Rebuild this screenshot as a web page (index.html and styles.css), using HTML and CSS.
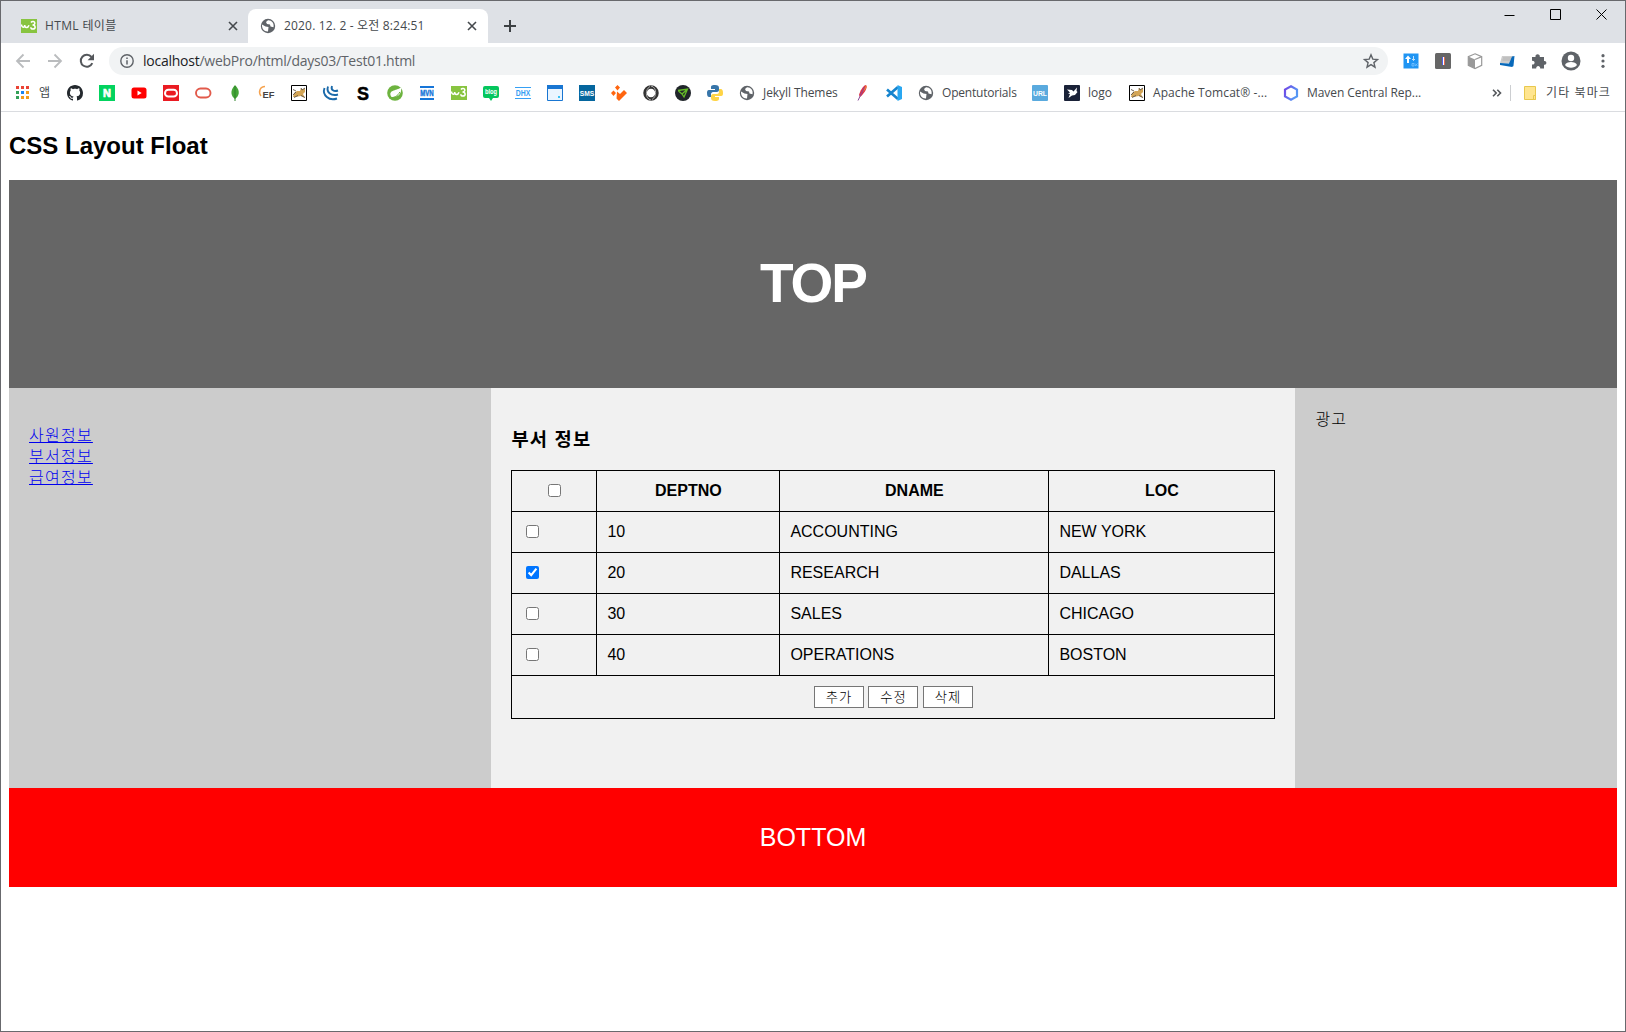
FILE: index.html
```html
<!DOCTYPE html>
<html lang="ko">
<head>
<meta charset="utf-8">
<title>2020. 12. 2 - 오전 8:24:51</title>
<link rel="stylesheet" href="styles.css">
</head>
<body>
<svg class="defs" width="0" height="0" aria-hidden="true">
  <symbol id="globe" viewBox="0 0 16 16"><circle cx="8" cy="8" r="7.2" fill="#5f6368"/><path d="M2 6.500 5.500 8.500l3 .5-.5 4.500C4 13.800 1.800 10.500 2 6.500zM8 2.200 6 4l1 2 3 .5.5 2 3 .8C14.500 5 11.500 2 8 2.200z" fill="#fff"/></symbol>
  <symbol id="w3" viewBox="0 0 16 16"><path d="M0 1h16v14H0z" fill="#88c440"/><path d="M.5 6.500c.2 3.500 3.200 3.500 3.200.5 0 3.300 3.300 3.300 4.300.300M10 4.500c1-1.500 4-1.300 3.800.8-.1 1-1 1.700-2.300 1.700 3.300 0 3.500 4 .5 4-1.500 0-2.200-.8-2.200-1.800" fill="none" stroke="#fff" stroke-width="1.500"/></symbol>
  <symbol id="tomcat" viewBox="0 0 16 16"><path d="M.5.500h15v15H.5z" fill="#fff" stroke="#000"/><path d="m2 12 1-4 3-2 3 0 1-3 1.500 1.500L14 3v4l-2 2 2 4-4-2-3 .5L4 12z" fill="#d3a557"/><path d="m2 4.500 3 1.500M3 12.500l4-2m3 0 4 2M10 3l1 2 3-2M2 10l3-3" fill="none" stroke="#5d5348" stroke-width=".9"/></symbol>
</svg>
<div class="window">
  <div class="tabstrip">
    <div class="tab">
      <svg class="ic" viewBox="0 0 16 16"><use href="#w3"/></svg>
      <span class="tab-title t1">HTML 테이블</span>
      <svg class="close" viewBox="0 0 10 10"><path d="m1 1 8 8m0-8-8 8"/></svg>
    </div>
    <div class="tab active">
      <svg class="ic" viewBox="0 0 16 16"><use href="#globe"/></svg>
      <span class="tab-title t2">2020. 12. 2 - 오전 8:24:51</span>
      <svg class="close" viewBox="0 0 10 10"><path d="m1 1 8 8m0-8-8 8"/></svg>
    </div>
    <svg class="plus" viewBox="0 0 12 12"><path d="M6 0v12M0 6h12"/></svg>
    <div class="controls">
      <svg viewBox="0 0 11 11"><path d="M.5 6.500h10"/></svg>
      <svg viewBox="0 0 11 11"><path d="M.5.500h10v10H.5z"/></svg>
      <svg viewBox="0 0 11 11"><path d="m.5.500 10 10m0-10-10 10"/></svg>
    </div>
  </div>
  <div class="toolbar">
    <svg class="nav" viewBox="0 0 16 16"><path d="M15 8H2m6.500-6.500L2 8l6.500 6.500" fill="none" stroke="#babcbe" stroke-width="1.800"/></svg>
    <svg class="nav" viewBox="0 0 16 16"><path d="M1 8h13M7.500 1.500 14 8l-6.500 6.500" fill="none" stroke="#babcbe" stroke-width="1.800"/></svg>
    <svg class="nav" viewBox="0 0 16 16"><path d="M13.300 10.200A6 6 0 1 1 12.500 4" fill="none" stroke="#54575b" stroke-width="2"/><path d="M15 .8v6.400H8.600z" fill="#54575b"/></svg>
    <div class="omnibox">
      <svg class="info" viewBox="0 0 14 14"><circle cx="7" cy="7" r="6.200" fill="none" stroke="#5f6368" stroke-width="1.400"/><path d="M7 6.200v4.200M7 3.500V5" stroke="#5f6368" stroke-width="1.500"/></svg>
      <span class="url"><b>localhost</b>/webPro/html/days03/Test01.html</span>
      <svg class="star" viewBox="0 0 16 16"><path d="m8 1.800 1.800 4.300 4.700.4-3.600 3.100 1.100 4.600L8 11.700l-4 2.500 1.100-4.600L1.500 6.500l4.700-.4z" fill="none" stroke="#5f6368" stroke-width="1.400"/></svg>
    </div>
    <div class="exts">
      <svg viewBox="0 0 16 16"><path d="M.5.500h15v15H.5z" fill="#2095f3"/><path d="M5 10V4.500" stroke="#fff" stroke-width="2"/><path d="m2 6 3-3.500L8 6z" fill="#fff"/><path d="M10.500 3v4.500M9 6l1.500 1.500L12 6" fill="none" stroke="#bfe1fb"/><path d="M9 10.500h2v2.500H9zm3 0 2.500 2.500m0-2.500L12 13" fill="none" stroke="#7dc5ff" stroke-width=".8"/></svg>
      <svg viewBox="0 0 16 16"><rect width="16" height="16" rx="1.500" fill="#666"/><path d="M7.500 4v8" stroke="#5360e8"/><path d="M8.500 4v8" stroke="#fff"/><path d="M9.500 4v8" stroke="#e26a50"/></svg>
      <svg viewBox="0 0 16 16"><path d="m8 .8 6.700 2.800v8.800L8 15.500l-6.700-3.100V3.600z" fill="#fff" stroke="#999" stroke-width="1.200"/><path d="M1.300 3.600 8 6.500v9l-6.700-3.100z" fill="#999"/><path d="m8 6.500 6.700-2.900" stroke="#999" stroke-width="1.200"/></svg>
      <svg viewBox="0 0 16 16"><path d="M3 3h11l-2 7H1z" fill="#ccc"/><path d="m15.500 3-1 9.500c-.2 1.500-1.500 1.500-3 1.300L1 12v-2l9 .5 3-7z" fill="#0869ba"/><path d="M4 5h8M3.500 7h8" stroke="#aaa" stroke-width=".7"/></svg>
      <svg viewBox="0 0 16 16"><path d="M1 4h3.500c-.8-3.800 5-3.800 4.300 0H13v4c3.200-.5 3.200 4 0 3.800V15.500H9.200c.3-3.500-4.300-3.500-4 0H1v-4c3.500.4 3.500-4 0-3.800z" fill="#5f6368"/></svg>
      <svg class="avatar" viewBox="0 0 20 20"><circle cx="10" cy="10" r="9.500" fill="#5f6368"/><circle cx="10" cy="7" r="3.200" fill="#fff"/><path d="M4 14c1-4 11-4 12 0-2.500 3.700-9.500 3.700-12 0z" fill="#fff"/></svg>
      <svg viewBox="0 0 16 16"><g fill="#5f6368"><circle cx="8" cy="2.700" r="1.600"/><circle cx="8" cy="8" r="1.600"/><circle cx="8" cy="13.300" r="1.600"/></g></svg>
    </div>
  </div>
  <div class="bookmarks">
    <svg viewBox="0 0 16 16"><path d="M1 1h3v3H1zm5 0h3v3H6zm5 0h3v3h-3z" fill="#ea4335"/><path d="M1 6h3v3H1zM1 11h3v3H1z" fill="#34a058"/><path d="M6 6h3v3H6z" fill="#1a85f0"/><path d="M11 6h3v3h-3zM6 11h3v3H6zm5 0h3v3h-3z" fill="#f29b1d"/></svg>
    <span class="label app">앱</span>
    <svg viewBox="0 0 16 16"><path fill="#24292e" d="M8 0C3.580 0 0 3.580 0 8c0 3.540 2.290 6.530 5.470 7.590.4.070.55-.17.55-.38 0-.19-.01-.82-.01-1.490-2.010.37-2.530-.49-2.690-.94-.09-.23-.48-.94-.82-1.130-.28-.15-.68-.52-.01-.53.63-.01 1.080.58 1.230.82.72 1.210 1.870.87 2.330.66.070-.52.280-.87.510-1.070-1.780-.2-3.640-.89-3.640-3.950 0-.87.310-1.590.820-2.150-.08-.2-.36-1.020.08-2.120 0 0 .67-.21 2.200.82.640-.18 1.320-.27 2-.27s1.360.09 2 .27c1.530-1.040 2.200-.82 2.200-.82.440 1.100.160 1.920.080 2.120.510.560.820 1.270.820 2.150 0 3.070-1.870 3.750-3.650 3.950.290.250.540.730.540 1.480 0 1.070-.01 1.930-.01 2.200 0 .21.150.46.550.38A8.010 8.010 0 0 0 16 8c0-4.420-3.580-8-8-8z"/></svg>
    <svg viewBox="0 0 16 16"><path d="M0 0h16v16H0z" fill="#03d35f"/><text x="8" y="12" text-anchor="middle" class="g" font-size="11" fill="#fff" stroke="#fff" stroke-width=".7">N</text></svg>
    <svg viewBox="0 0 16 16"><rect x=".5" y="2.500" width="15" height="11" rx="2.500" fill="#f00"/><path d="m6.500 5.500 4.200 2.500-4.200 2.500z" fill="#fff"/></svg>
    <svg viewBox="0 0 16 16"><path d="M0 0h16v16H0z" fill="#ea1b22"/><rect x="2" y="4.800" width="12" height="6.800" rx="3.400" fill="none" stroke="#fff" stroke-width="2"/></svg>
    <svg viewBox="0 0 16 16"><rect x="1" y="3.500" width="14.500" height="9" rx="4.500" fill="none" stroke="#e25a4b" stroke-width="1.900"/></svg>
    <svg viewBox="0 0 16 16"><path d="M8 0c6 6 4 11 0 14C4 11 2.500 6 8 0z" fill="#45a538"/><path d="M8 1v15" stroke="#2f832b"/></svg>
    <svg viewBox="0 0 16 16"><path d="M6 1.500C1 1.500-1 7 2 11" fill="none" stroke="#f6a34f" stroke-width="1.500"/><text x="3.500" y="12.500" class="g" font-size="9.500" textLength="12" lengthAdjust="spacingAndGlyphs" fill="#444">EF</text></svg>
    <svg viewBox="0 0 16 16"><use href="#tomcat"/></svg>
    <svg viewBox="0 0 16 16"><path d="M1.500 3c-2.500 7 4.500 13.500 12.500 10.500M5 1.500C3 7.500 8.500 11.500 15 9.500M9 1c-1.500 4 2 6 6 4.500" fill="none" stroke="#1b6aaa" stroke-width="1.900"/></svg>
    <svg viewBox="0 0 16 16"><text x="2" y="15" class="g" font-size="19" textLength="12" lengthAdjust="spacingAndGlyphs" fill="#000" stroke="#000" stroke-width=".5">S</text></svg>
    <svg viewBox="0 0 16 16"><circle cx="8" cy="8" r="7.800" fill="#6db33f"/><path d="M14 2.500C15 8 12 12.500 4.500 12 .5 5 9 6 14 2.500z" fill="#fff"/><path d="M2.500 13C7 13 11 11 12.800 7" fill="none" stroke="#6db33f"/></svg>
    <svg viewBox="0 0 16 16"><path d="M1 1h14v2H1zm0 12h14v2H1z" fill="#1675d8"/><text x="1.200" y="11.300" class="g" font-size="8.500" textLength="13.500" lengthAdjust="spacingAndGlyphs" fill="#1675d8" stroke="#1675d8" stroke-width=".4">MVN</text></svg>
    <svg viewBox="0 0 16 16"><use href="#w3"/></svg>
    <svg viewBox="0 0 16 16"><path d="M2 1h12q2 0 2 2v8q0 2-2 2h-4l-2 3-2-3H2q-2 0-2-2V3q0-2 2-2z" fill="#05c65d"/><text x="2" y="9" class="g" font-size="6.500" textLength="12" lengthAdjust="spacingAndGlyphs" fill="#fff">blog</text></svg>
    <svg viewBox="0 0 16 16"><path d="M0 2h16v1H0zm0 11h16v1H0z" fill="#36a0f4"/><text x=".8" y="11.200" class="g" font-size="9" textLength="14.500" lengthAdjust="spacingAndGlyphs" fill="#36a0f4">DHX</text></svg>
    <svg viewBox="0 0 16 16"><path d="M.5.500h15v15H.5z" fill="#eaf5ff" stroke="#1976d2"/><path d="M0 0h16v4H0z" fill="#1976d2"/><path d="M11 11h2v2h-2z" fill="#3ac1f4"/></svg>
    <svg viewBox="0 0 16 16"><path d="M0 0h16v16H0z" fill="#05669e"/><text x=".8" y="11" class="g" font-size="8" textLength="14.500" lengthAdjust="spacingAndGlyphs" fill="#fff">SMS</text></svg>
    <svg viewBox="0 0 16 16"><path d="m6.500 0 2.500 2.500-2.500 3L4 2.500zM2.500 5.500 5 8l-2.500 3L0 8zM6 6.500l3 2.500 4-4 3 3-8 8-2.500-2.500z" fill="#ff650f"/></svg>
    <svg viewBox="0 0 16 16"><circle cx="8" cy="8" r="6" fill="none" stroke="#333" stroke-width="3.500"/><path d="M8 1c6 1 6 11 1 13.500M8 15C2 14 2 4 7 1.500" fill="none" stroke="#aaa"/></svg>
    <svg viewBox="0 0 16 16"><circle cx="8" cy="8" r="8" fill="#20252a"/><path d="m3 5.500 9.500-1.500L9 12l-2-3-3.500-3M7 9l5-4.500" fill="none" stroke="#65bd28" stroke-width="1.300"/></svg>
    <svg viewBox="0 0 16 16"><path d="M8 0c-4 0-4 1-4 3v1h4v1H2C0 5 0 7 0 8c0 3 1 4 2 4h2V9c0-1 1-2 2-2h4c1 0 2-1 2-2V3c0-2-1-3-4-3z" fill="#3775a9"/><path d="M8 16c4 0 4-1 4-3v-1H8v-1h6c2 0 2-2 2-3 0-3-1-4-2-4h-2v3c0 1-1 2-2 2H6c-1 0-2 1-2 2v2c0 2 1 3 4 3z" fill="#ffd445"/></svg>
    <svg viewBox="0 0 16 16"><use href="#globe"/></svg>
    <span class="label l-jekyll">Jekyll Themes</span>
    <svg viewBox="0 0 16 16"><path d="M11.500 0c3 1-.5 8-5.500 12L5 10C6 6 9 1 11.500 0z" fill="#dc3349"/><path d="M10.500 2 4 15.500" stroke="#8b4a99"/><path d="M12 0c2 2-1 5-3 7z" fill="#f47a36"/></svg>
    <svg viewBox="0 0 16 16"><path d="m1 4.500 11 9.500M1 11.500 12 2" stroke="#1684ce" stroke-width="2.700"/><path d="m11.500 0 4.500 2v12l-4.500 2z" fill="#29a7f1"/></svg>
    <svg viewBox="0 0 16 16"><use href="#globe"/></svg>
    <span class="label l-open">Opentutorials</span>
    <svg viewBox="0 0 16 16"><rect width="16" height="16" rx="1" fill="#5aaade"/><text x="1" y="10.800" class="g" font-size="7.500" textLength="14" lengthAdjust="spacingAndGlyphs" fill="#fff">URL</text></svg>
    <svg viewBox="0 0 16 16"><rect width="16" height="16" rx="1" fill="#1a2238"/><path d="m3 4.500 5 .5 1.500 1.500L13 2.500l-.5 3.500 1 1-2.500 3-3 .5L4.500 13l1.500-4-2-.5 2-1z" fill="#fff"/></svg>
    <span class="label l-logo">logo</span>
    <svg viewBox="0 0 16 16"><use href="#tomcat"/></svg>
    <span class="label l-tomcat">Apache Tomcat® -...</span>
    <svg viewBox="0 0 16 16"><defs><linearGradient id="hex" x2="1" y2=".5"><stop stop-color="#7044e5"/><stop offset="1" stop-color="#5597f4"/></linearGradient></defs><path d="m8 1.300 6 3.300v6.800l-6 3.300-6-3.300V4.600z" fill="none" stroke="url(#hex)" stroke-width="2.200"/></svg>
    <span class="label l-maven">Maven Central Rep...</span>
    <div class="others">
      <svg class="more" viewBox="0 0 10 8"><path d="m1 .8 3.200 3.200L1 7.200m4.300-6.400L8.500 4 5.300 7.200" fill="none" stroke="#54575b" stroke-width="1.600"/></svg>
      <i class="sep"></i>
      <svg viewBox="0 0 16 16"><path d="M2.500 1.500h11v13h-11z" fill="#ffe58f" stroke="#e8c84e"/><path d="M11.500 10.500h2v4h-2z" fill="#ffe58f" stroke="#e8c84e"/></svg>
      <span class="label l-etc">기타 북마크</span>
    </div>
  </div>
  <main class="page">
    <h2>CSS Layout Float</h2>
    <header class="top"><h1>TOP</h1></header>
    <div class="row">
      <nav class="side">
        <a href="#">사원정보</a>
        <a href="#">부서정보</a>
        <a href="#">급여정보</a>
      </nav>
      <section class="content">
        <h3>부서 정보</h3>
        <table>
          <colgroup><col class="c1"><col class="c2"><col class="c3"><col class="c4"></colgroup>
          <thead><tr><th><input type="checkbox"></th><th>DEPTNO</th><th>DNAME</th><th>LOC</th></tr></thead>
          <tbody>
            <tr><td><input type="checkbox"></td><td>10</td><td>ACCOUNTING</td><td>NEW YORK</td></tr>
            <tr><td><input type="checkbox" checked></td><td>20</td><td>RESEARCH</td><td>DALLAS</td></tr>
            <tr><td><input type="checkbox"></td><td>30</td><td>SALES</td><td>CHICAGO</td></tr>
            <tr><td><input type="checkbox"></td><td>40</td><td>OPERATIONS</td><td>BOSTON</td></tr>
          </tbody>
          <tfoot><tr><td colspan="4"><div class="actions"><button>추가</button><button>수정</button><button>삭제</button></div></td></tr></tfoot>
        </table>
      </section>
      <aside class="ad">광고</aside>
    </div>
    <footer class="bottom">BOTTOM</footer>
  </main>
</div>
</body>
</html>
```
FILE: styles.css
```css
* { box-sizing: border-box; }
body { margin: 0; background: #fff; font-family: "Liberation Sans", "Noto Sans CJK KR", sans-serif; font-size: 16px; color: #000; }
svg { display: block; flex: none; overflow: visible; }
.defs { position: absolute; }
.window { height: 1032px; border: 1px solid #68696d; overflow: hidden; display: flex; flex-direction: column; }

.tabstrip { height: 42px; flex: none; background: #dee1e6; display: flex; align-items: flex-start; }
.tab { display: flex; align-items: center; width: 240px; height: 34px; margin-top: 8px; padding: 0 11px 0 12px; color: #45494d; }
.tab:first-child { width: 247px; padding-left: 20px; padding-right: 10px; }
.tab .ic { width: 16px; height: 16px; }
.tab.active { background: #fff; border-radius: 8px 8px 0 0; }
.tab-title { margin-left: 8px; font: 12px/16px "Open Sans", "Noto Sans CJK KR", sans-serif; white-space: nowrap; }
.t1 { letter-spacing: .35px; }
.t2 { letter-spacing: .17px; }
.close { width: 10px; height: 10px; margin-left: auto; fill: none; stroke: #45494d; stroke-width: 1.6; }
.plus { width: 12px; height: 12px; margin: 19px 0 0 16px; stroke: #3c4043; stroke-width: 2; }
.controls { display: flex; gap: 35px; margin: 8px 18px 0 auto; }
.controls svg { width: 11px; height: 11px; fill: none; stroke: #000; stroke-width: 1; }

.toolbar { height: 36px; flex: none; display: flex; align-items: center; padding: 0 14px; gap: 16px; }
.nav { width: 16px; height: 16px; }
.omnibox { flex: 1; height: 28px; margin-left: -2px; margin-right: -1px; border-radius: 14px; background: #f1f3f4; display: flex; align-items: center; padding: 0 9px 0 11px; }
.info { width: 14px; height: 14px; }
.url { margin-left: 9px; font: 14px/20px "Open Sans", sans-serif; letter-spacing: -.25px; color: #5f6368; white-space: nowrap; }
.url b { font-weight: 400; color: #202124; }
.star { width: 16px; height: 16px; margin-left: auto; }
.exts { display: flex; align-items: center; gap: 16px; }
.exts svg { width: 16px; height: 16px; }
.exts .avatar { width: 20px; height: 20px; margin: 0 -2px; }

.bookmarks { height: 33px; flex: none; display: flex; align-items: center; gap: 16px; padding: 0 14px 4px; border-bottom: 1px solid #dadce0; }
.bookmarks svg { width: 16px; height: 16px; }
.label { margin-left: -8px; font: 12px/16px "Open Sans", "Noto Sans CJK KR", sans-serif; color: #45494d; white-space: nowrap; }
.app { width: 12px; }
.l-jekyll { width: 75px; letter-spacing: -.08px; }
.l-open { width: 74px; letter-spacing: -.2px; }
.l-logo { width: 25px; }
.l-tomcat { width: 114px; letter-spacing: .08px; }
.l-maven { width: 114px; letter-spacing: -.06px; }
.l-etc { width: 65px; letter-spacing: 1.1px; }
.others { display: flex; align-items: center; gap: 16px; margin-left: auto; }
.bookmarks .more { width: 10px; height: 8px; }
.sep { width: 1px; height: 16px; background: #ccced1; margin: 0 -5px 0 -8px; }
.g { font-family: "Liberation Sans", sans-serif; font-weight: 700; }

.page { padding: 0 8px; }
h2 { margin: 20px 0 20px; font-size: 24px; line-height: 28px; }
.top { height: 208px; background: #666; color: #fff; display: flex; align-items: center; justify-content: center; }
.top h1 { margin: 0 0 2px; font-size: 55px; line-height: 60px; letter-spacing: -2px; }
.row { display: flex; height: 400px; }
.side { width: 30%; padding: 37px 20px; background: #ccc; display: flex; flex-direction: column; align-items: flex-start; }
.side a { color: #00e; font-size: 16px; line-height: 21px; font-weight: 300; letter-spacing: 1.25px; }
.content { width: 50%; padding: 20px; background: #f1f1f1; }
.ad { width: 20%; padding: 21px 20px; background: #ccc; line-height: 21px; font-weight: 300; letter-spacing: 1.25px; }
h3 { margin: 19px 0 18px; font-size: 18.720px; line-height: 25px; letter-spacing: 1.200px; }
table { width: 764px; table-layout: fixed; border-collapse: collapse; }
.c1 { width: 85px; }
.c2 { width: 183px; }
.c3 { width: 269px; }
th, td { height: 41px; padding: 0 10px; border: 1px solid #000; line-height: 18px; }
td { text-align: left; }
tfoot td { height: 43px; }
input { display: block; width: 13px; height: 13px; margin: 0 4px 2px; }
th input { margin: 0 auto 2px; }
.actions { display: flex; justify-content: center; gap: 4.500px; }
button { width: 50px; height: 22px; padding: 1px 0 0; border: 1px solid #767676; background: #fff; color: #000; font: 300 13.333px/18px "Liberation Sans", "Noto Sans CJK KR", sans-serif; letter-spacing: .8px; }
.bottom { height: 99px; background: #f00; color: #fff; font-size: 25px; display: flex; align-items: center; justify-content: center; }
```
